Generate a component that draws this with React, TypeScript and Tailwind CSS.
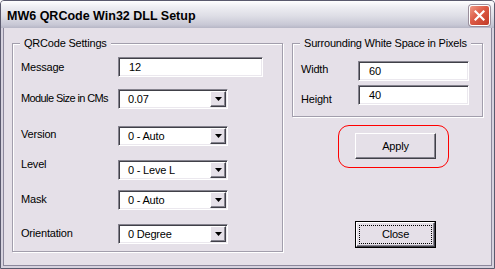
import type { ReactNode } from 'react'

const sunken =
  'border border-t-[#85838e] border-l-[#85838e] border-r-white border-b-white shadow-[inset_1px_1px_0_#404048,inset_-1px_-1px_0_#ebe8ee] bg-white'
const raised =
  'border border-t-white border-l-white border-r-[#404048] border-b-[#404048] shadow-[inset_-1px_-1px_0_#85838e] bg-[#e5e0e8]'

function GroupBox({ title, className, children }: { title: string; className: string; children: ReactNode }) {
  return (
    <div
      className={`flex flex-col border border-[#a29eac] shadow-[1px_1px_0_#ffffff,inset_1px_1px_0_#ffffff] ${className}`}
    >
      <span className="-mt-[7px] ml-[7px] self-start bg-[#e5e0e8] px-[4px] leading-[13px]">{title}</span>
      {children}
    </div>
  )
}

function TextField({ value, width }: { value: string; width: string }) {
  return (
    <div className={`${sunken} ${width} h-[20px] flex items-center pl-[10px] leading-[13px]`}>{value}</div>
  )
}

function Combo({ value }: { value: string }) {
  return (
    <div className={`${sunken} w-[110px] h-[20px] flex p-[1px]`}>
      <div className="flex-1 flex items-center pl-[8px] leading-[13px]">{value}</div>
      <div className={`${raised} w-[16px] flex items-center justify-center`}>
        <svg width="7" height="4" viewBox="0 0 7 4">
          <polygon points="0,0 7,0 3.5,4" fill="#000" />
        </svg>
      </div>
    </div>
  )
}

function Row({ label, labelTop, gap, children }: { label: string; labelTop: string; gap: string; children: ReactNode }) {
  return (
    <div className={`flex items-start pl-[8px] ${gap}`}>
      <span className={`w-[97px] leading-[13px] ${labelTop}`}>{label}</span>
      {children}
    </div>
  )
}

export default function App() {
  return (
    <div className="w-[495px] h-[269px] flex flex-col border border-[#5a5a6e] rounded-t-[4px] bg-[#d6d2de] font-['Liberation_Sans',Arial,sans-serif] text-[11px] tracking-[-0.2px] text-black overflow-hidden">
      {/* Title bar */}
      <div className="h-[27px] flex items-start justify-between pl-[6px] pr-[4px] bg-[linear-gradient(to_bottom,#ffffff_0%,#eeeef3_22%,#dedee6_55%,#c8c8d5_88%,#b6b6c6_100%)]">
        <span className="pt-[8px] text-[12.5px] font-bold leading-[15px] tracking-normal text-[#000000]">
          MW6 QRCode Win32 DLL Setup
        </span>
        <div className="mt-[4px] w-[21px] h-[21px] rounded-[3px] border border-white shadow-[0_0_0_1px_#9a8f9c] bg-[linear-gradient(135deg,#ef9a86_0%,#dc5a45_45%,#c23a26_100%)] flex items-center justify-center">
          <svg width="11" height="11" viewBox="0 0 11 11">
            <path d="M1.5 1.5 L9.5 9.5 M9.5 1.5 L1.5 9.5" stroke="#fff" strokeWidth="2.2" strokeLinecap="square" />
          </svg>
        </div>
      </div>

      {/* Body */}
      <div className="flex-1 flex mx-[2px] mb-[2px] border-x border-b border-[#8c889c] bg-[#e5e0e8] pl-[8px] pt-[15px]">
        <GroupBox title="QRCode Settings" className="w-[271px] h-[209px]">
          <Row label="Message" labelTop="mt-[4px]" gap="mt-[7px]">
            <TextField value="12" width="w-[145px]" />
          </Row>
          <Row label="Module Size in CMs" labelTop="mt-[3px] tracking-[-0.6px]" gap="mt-[12px]">
            <Combo value="0.07" />
          </Row>
          <Row label="Version" labelTop="mt-[2px]" gap="mt-[17px]">
            <Combo value="0 - Auto" />
          </Row>
          <Row label="Level" labelTop="-mt-[2px]" gap="mt-[14px]">
            <Combo value="0 - Leve L" />
          </Row>
          <Row label="Mask" labelTop="mt-[3px]" gap="mt-[10px]">
            <Combo value="0 - Auto" />
          </Row>
          <Row label="Orientation" labelTop="mt-[3px]" gap="mt-[14px]">
            <Combo value="0 Degree" />
          </Row>
        </GroupBox>

        <div className="ml-[9px] w-[191px] flex flex-col">
          <GroupBox title="Surrounding White Space in Pixels" className="h-[74px]">
            <div className="mt-[11px] flex items-start pl-[8px]">
              <span className="w-[57px] mt-[2px] leading-[13px]">Width</span>
              <TextField value="60" width="w-[111px]" />
            </div>
            <div className="mt-[4px] flex items-start pl-[8px]">
              <span className="w-[57px] mt-[8px] leading-[13px]">Height</span>
              <TextField value="40" width="w-[111px]" />
            </div>
          </GroupBox>

          <div className="ml-[46px] mt-[8px] w-[111px] h-[43px] rounded-[11px] border border-[#ff0000] pl-[16px] pt-[7px]">
            <button className={`${raised} w-[81px] h-[26px] flex items-center justify-center leading-[13px]`}>
              Apply
            </button>
          </div>

          <button className="ml-[63px] mt-[53px] w-[81px] h-[27px] flex border border-black bg-[#e5e0e8]">
            <span className={`${raised} flex-1 flex p-[2px]`}>
              <span className="flex-1 flex items-center justify-center border border-dotted border-black leading-[13px]">
                Close
              </span>
            </span>
          </button>
        </div>
      </div>
    </div>
  )
}
